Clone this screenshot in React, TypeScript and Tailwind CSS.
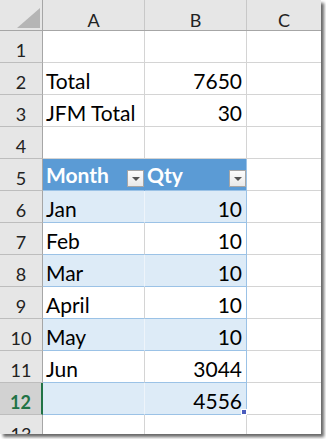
import React from "react";

type Row = {
  n: number;
  a?: string;
  b?: string;
  kind?: "plain" | "head" | "band" | "white";
};

const rows: Row[] = [
  { n: 1 },
  { n: 2, a: "Total", b: "7650" },
  { n: 3, a: "JFM Total", b: "30" },
  { n: 4 },
  { n: 5, a: "Month", b: "Qty", kind: "head" },
  { n: 6, a: "Jan", b: "10", kind: "band" },
  { n: 7, a: "Feb", b: "10", kind: "white" },
  { n: 8, a: "Mar", b: "10", kind: "band" },
  { n: 9, a: "April", b: "10", kind: "white" },
  { n: 10, a: "May", b: "10", kind: "band" },
  { n: 11, a: "Jun", b: "3044", kind: "white" },
  { n: 12, b: "4556", kind: "band" },
  { n: 13 },
];

function FilterButton() {
  return (
    <div className="w-[17px] h-[17px] border border-[#a6a6a6] bg-gradient-to-b from-[#fdfdfd] to-[#e9e9e9] flex items-center justify-center">
      <div className="w-0 h-0 border-l-[4px] border-r-[4px] border-t-[4px] border-l-transparent border-r-transparent border-t-[#555]" />
    </div>
  );
}

function SheetRow({ row }: { row: Row }) {
  const kind = row.kind ?? "plain";
  const selected = row.n === 12;
  const inTable = kind !== "plain";

  const fill =
    kind === "head"
      ? "bg-[#5b9bd5]"
      : kind === "band"
        ? "bg-[#ddebf7]"
        : "bg-white";
  const hLine = inTable ? "border-b-[#9bc2e6]" : "border-b-[#d4d4d4]";
  const aRight =
    kind === "head"
      ? "border-r-[#5b9bd5]"
      : kind === "band"
        ? "border-r-[#eef4fa]"
        : "border-r-[#d4d4d4]";
  const bRight = inTable ? "border-r-[#9bc2e6]" : "border-r-[#d4d4d4]";

  return (
    <div className="flex h-[32px]">
      {/* row number */}
      <div
        className={`w-[43px] shrink-0 border-b border-b-[#bdbdbd] flex items-end justify-center pb-[3px] text-[18px] leading-none ${
          selected
            ? "bg-[#d2d2d2] text-[#217346] font-bold border-r-2 border-r-[#217346]"
            : "bg-[#e6e6e6] text-[#222] border-r border-r-[#a6a6a6]"
        }`}
      >
        {row.n}
      </div>

      {/* column A */}
      <div
        className={`w-[102px] shrink-0 border-r border-b ${fill} ${hLine} ${aRight} flex items-end justify-between pl-[3px] pb-[3px] text-[21px] leading-none ${
          kind === "head" ? "text-white font-bold pb-[1px]" : "text-black"
        }`}
      >
        <span className={kind === "head" ? "pb-[2px]" : ""}>{row.a}</span>
        {kind === "head" && <FilterButton />}
      </div>

      {/* column B */}
      <div
        className={`relative w-[102px] shrink-0 border-r border-b ${fill} ${hLine} ${bRight} flex items-end pb-[3px] text-[21px] leading-none ${
          kind === "head"
            ? "text-white font-bold justify-between pl-[2px] pb-[1px]"
            : "text-black justify-end pr-[4px]"
        }`}
      >
        <span className={kind === "head" ? "pb-[2px]" : ""}>{row.b}</span>
        {kind === "head" && <FilterButton />}
        {selected && (
          <div className="absolute right-[-1px] bottom-[-1px] w-[6px] h-[6px] bg-[#4a5cbd] border border-white" />
        )}
      </div>

      {/* column C */}
      <div className="flex-1 border-b border-b-[#d4d4d4] bg-white" />
    </div>
  );
}

export default function App() {
  return (
    <div className="w-[326px] h-[439px] bg-white">
      <div
        className="w-[321px] h-[434px] overflow-hidden bg-white shadow-[3px_3px_3px_rgba(0,0,0,0.6)]"
        style={{ fontFamily: "Lato, 'Open Sans', sans-serif" }}
      >
        {/* column header row */}
        <div className="flex h-[31px] bg-[#e6e6e6] border-b border-b-[#a6a6a6] text-[18px] leading-none text-[#222]">
          <div className="relative w-[43px] shrink-0 border-r border-r-[#a6a6a6]">
            <div
              className="absolute left-[17px] top-[8px] w-[23px] h-[20px] bg-[#b5b5b5]"
              style={{ clipPath: "polygon(100% 0, 100% 100%, 0 100%)" }}
            />
          </div>
          <div className="w-[102px] shrink-0 border-r border-r-[#c8c8c8] flex items-end justify-center pb-[1px]">
            A
          </div>
          <div className="w-[102px] shrink-0 border-r border-r-[#c8c8c8] flex items-end justify-center pb-[1px]">
            B
          </div>
          <div className="flex-1 flex items-end justify-center pb-[1px]">C</div>
        </div>

        {rows.map((r) => (
          <SheetRow key={r.n} row={r} />
        ))}
      </div>
    </div>
  );
}
